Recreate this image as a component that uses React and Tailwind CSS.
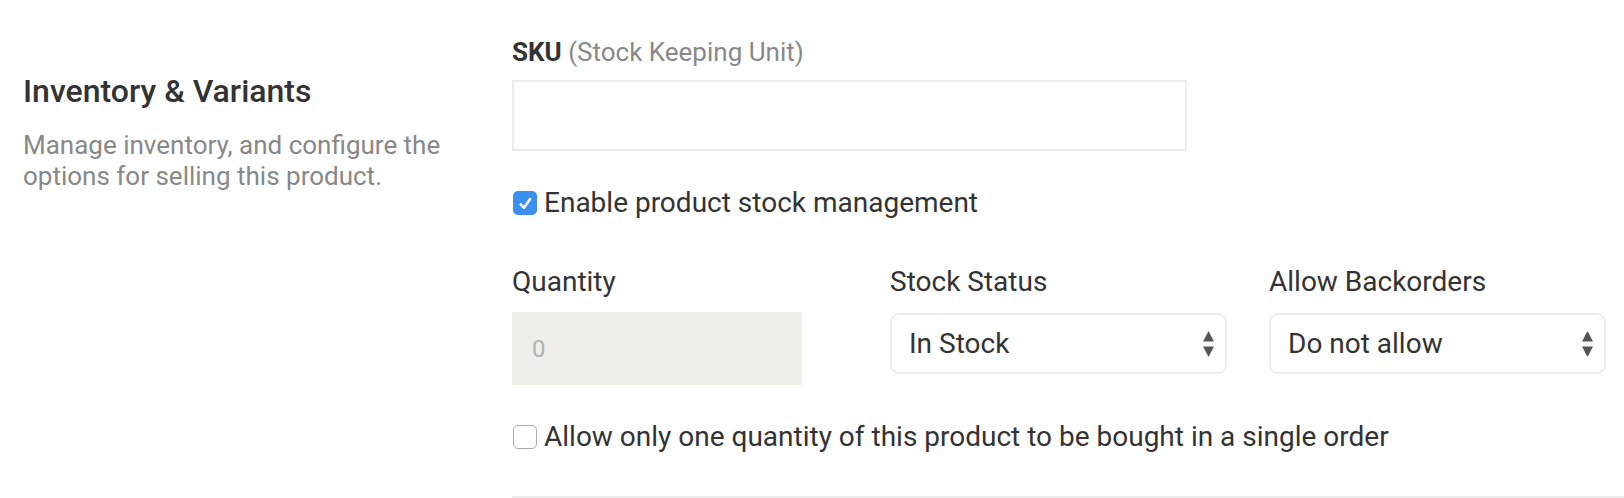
import React from 'react'

function Arrows() {
  return (
    <svg width="11" height="26" viewBox="0 0 11 26" className="absolute right-[11px] top-1/2 -translate-y-1/2 pointer-events-none">
      <path d="M5.5 0 L11 10.5 L0 10.5 Z" fill="#555" />
      <path d="M5.5 26 L11 15.5 L0 15.5 Z" fill="#555" />
    </svg>
  )
}

function Select({ value }) {
  return (
    <div className="relative w-[337px] h-[61px] border-2 border-[#ececec] rounded-[9px] bg-white flex items-center pl-[17px]">
      <span className="text-[28px] text-[#333]">{value}</span>
      <Arrows />
    </div>
  )
}

export default function App() {
  return (
    <div className="w-[1624px] h-[498px] bg-white flex font-['Roboto',sans-serif] overflow-hidden">
      {/* left description */}
      <div className="w-[512px] pl-[23px] pt-[71px]">
        <h2 className="text-[32px] leading-[40px] font-medium text-[#333]">Inventory &amp; Variants</h2>
        <p className="mt-[19px] text-[26px] leading-[31px] text-[#888] w-[430px]">
          Manage inventory, and configure the options for selling this product.
        </p>
      </div>

      {/* right form */}
      <div className="flex-1 pt-[36px] flex flex-col">
        <div className="text-[26px] leading-[32px] text-[#888]">
          <span className="font-bold text-[#333]">SKU</span> (Stock Keeping Unit)
        </div>
        <div className="mt-[12px] w-[675px] h-[71px] border-2 border-[#ececec]" />

        <label className="mt-[38px] flex items-center h-[28px]">
          <span className="w-[24px] h-[24px] ml-[1px] rounded-[5px] bg-[#3a8ff0] flex items-center justify-center">
            <svg width="15" height="15" viewBox="0 0 14 14">
              <path d="M2.5 7.8 L5.6 11 L11.3 2.8" stroke="#fff" strokeWidth="2.4" fill="none" strokeLinecap="round" strokeLinejoin="round" />
            </svg>
          </span>
          <span className="ml-[7px] text-[28px] text-[#333]">Enable product stock management</span>
        </label>

        <div className="mt-[48px] flex">
          <div className="w-[378px]">
            <div className="text-[28px] leading-[34px] text-[#333]">Quantity</div>
            <div className="mt-[13px] w-[290px] h-[73px] bg-[#efeee8] flex items-center pl-[20px] text-[24px] text-[#b0b0b0]">0</div>
          </div>
          <div className="w-[379px]">
            <div className="text-[28px] leading-[34px] text-[#333]">Stock Status</div>
            <div className="mt-[14px]"><Select value="In Stock" /></div>
          </div>
          <div>
            <div className="text-[28px] leading-[34px] text-[#333]">Allow Backorders</div>
            <div className="mt-[14px]"><Select value="Do not allow" /></div>
          </div>
        </div>

        <label className="mt-[38px] flex items-center h-[28px]">
          <span className="w-[24px] h-[24px] ml-[1px] rounded-[5px] border-[1.5px] border-[#aaa] bg-white" />
          <span className="ml-[7px] text-[28px] text-[#333]">Allow only one quantity of this product to be bought in a single order</span>
        </label>

        <div className="mt-auto h-[2px] bg-[#ebebeb]" />
      </div>
    </div>
  )
}
